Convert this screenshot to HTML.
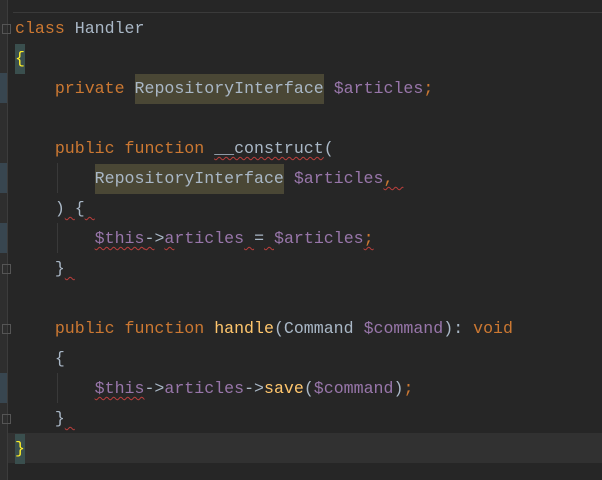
<!DOCTYPE html>
<html><head><meta charset="utf-8"><style>
body{margin:0;width:602px;height:480px;background:#262626;overflow:hidden;position:relative;font-family:"Liberation Mono",monospace;font-size:16.6px;}
.gut{position:absolute;left:0;top:0;width:7px;height:480px;background:#2e2e2e;border-right:1px solid #3c3c3c;}
.mk{position:absolute;left:0;width:7px;height:30px;background:#384650;}
.top{position:absolute;left:13px;right:0;top:12px;height:1px;background:#3a3a3a;}
.cur{position:absolute;left:8px;right:0;top:433px;height:30px;background:#313131;}
.ln{position:absolute;left:15px;height:30px;line-height:30px;white-space:pre;color:#a9b7c6;}
.k{color:#cc7832}.v{color:#9876aa}.f{color:#ffc66d}
.h{background:#4a4735;display:inline-block;height:30px}
.b{background:#3a4f4e;color:#ffef28;display:inline-block;height:30px}
.w{text-decoration:underline wavy #bc3f3c;text-decoration-thickness:1px;text-underline-offset:3px}
.g{position:absolute;width:1px;background:#393939}
.fold{position:absolute;left:2px;width:9px;height:10px;border:1px solid #555;box-sizing:border-box;}
</style></head><body>
<div class="gut"></div>
<div class="mk" style="top:73px"></div>
<div class="mk" style="top:163px"></div>
<div class="mk" style="top:223px"></div>
<div class="mk" style="top:373px"></div>
<div class="top"></div>
<div class="cur"></div>
<div class="g" style="left:57px;top:163px;height:30px"></div>
<div class="g" style="left:57px;top:223px;height:30px"></div>
<div class="g" style="left:57px;top:373px;height:30px"></div>
<div class="fold" style="top:24px"></div>
<div class="fold" style="top:264px"></div>
<div class="fold" style="top:324px"></div>
<div class="fold" style="top:414px"></div>
<div class="ln" style="top:14px"><span class="k">class</span> Handler</div>
<div class="ln" style="top:44px"><span class="b">{</span></div>
<div class="ln" style="top:74px">    <span class="k">private</span> <span class="h">RepositoryInterface</span> <span class="v">$articles</span><span class="k">;</span></div>
<div class="ln" style="top:134px">    <span class="k">public function</span> <span class="w">__construct</span>(</div>
<div class="ln" style="top:164px">        <span class="h">RepositoryInterface</span> <span class="v">$articles</span><span class="k w">, </span></div>
<div class="ln" style="top:194px">    )<span class="w"> </span>{<span class="w"> </span></div>
<div class="ln" style="top:224px">        <span class="v w">$this</span><span class="w">-</span>&gt;<span class="v"><span class="w">a</span>rticles</span><span class="w"> </span>=<span class="w"> </span><span class="v">$articles</span><span class="k w">;</span></div>
<div class="ln" style="top:254px">    }<span class="w"> </span></div>
<div class="ln" style="top:314px">    <span class="k">public function</span> <span class="f">handle</span>(Command <span class="v">$command</span>): <span class="k">void</span></div>
<div class="ln" style="top:344px">    {</div>
<div class="ln" style="top:374px">        <span class="v w">$this</span>-&gt;<span class="v">articles</span>-&gt;<span class="f">save</span>(<span class="v">$command</span>)<span class="k">;</span></div>
<div class="ln" style="top:404px">    }<span class="w"> </span></div>
<div class="ln" style="top:434px"><span class="b">}</span></div>
</body></html>
